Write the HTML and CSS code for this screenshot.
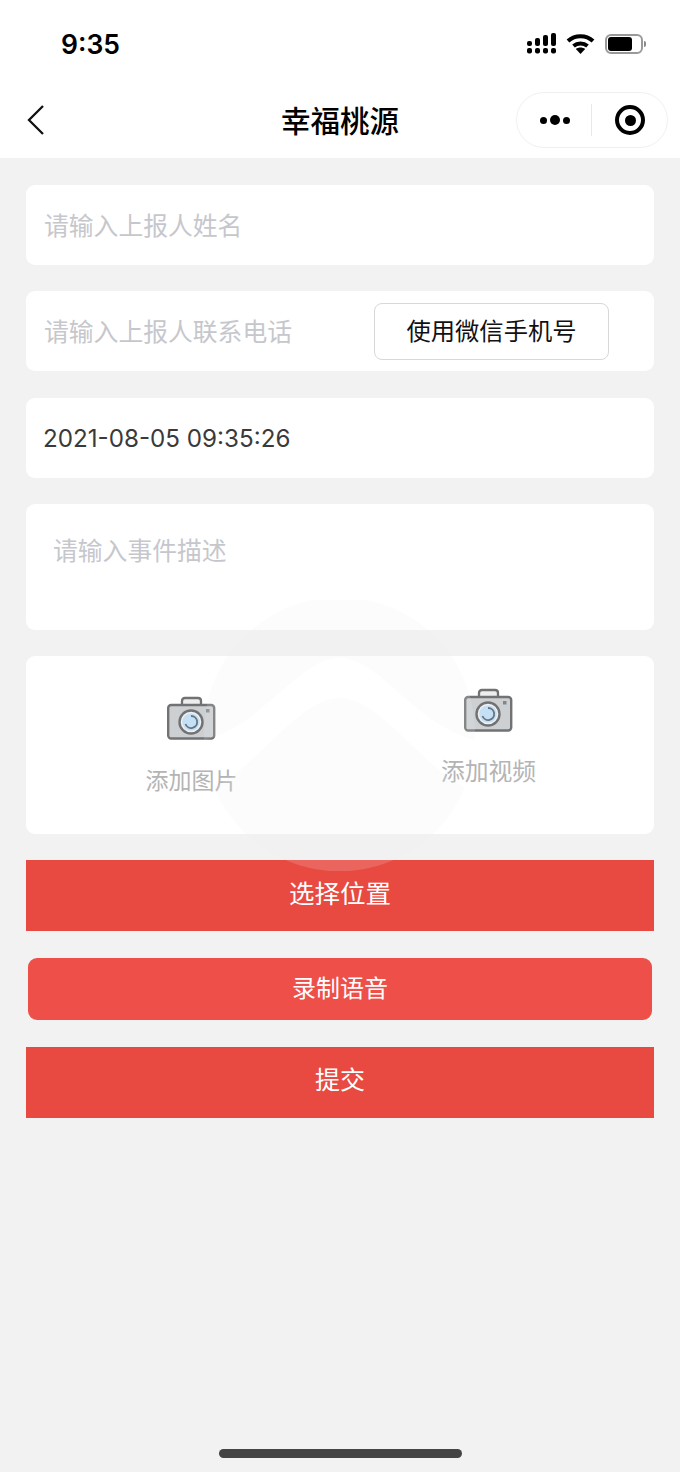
FILE: index.html
```html
<!DOCTYPE html>
<html lang="en">
<head>
  <meta charset="UTF-8" />
  <meta name="viewport" content="width=device-width, initial-scale=1.0"/>
  <title>幸福桃源</title>
  <link rel="stylesheet" href="styles.css">
</head>
<body>
  <div class="header">
    <div class="status-bar">
      <span class="time">9:35</span>
      <div class="status-icons">
        <svg width="30" height="21" viewBox="0 0 30 21" fill="#000">
          <rect x="0" y="8" width="5" height="5" rx="2"/>
          <rect x="8" y="5" width="5" height="8" rx="2"/>
          <rect x="16" y="2" width="5" height="11" rx="2"/>
          <rect x="24" y="0" width="5" height="13" rx="2"/>
          <rect x="0" y="15" width="5" height="5.500" rx="2"/>
          <rect x="8" y="15" width="5" height="5.500" rx="2"/>
          <rect x="16" y="15" width="5" height="5.500" rx="2"/>
          <rect x="24" y="15" width="5" height="5.500" rx="2"/>
        </svg>
        <svg class="wifi" width="29" height="21" viewBox="0 0 29 21" fill="none" stroke="#000" stroke-width="4">
          <path d="M2 8 C9 1.500 20 1.500 27 8"/>
          <path d="M7.500 13 C11.500 9.500 17.500 9.500 21.500 13"/>
          <path d="M14.500 21 L9.800 16 C12.500 14 16.500 14 19.200 16 Z" fill="#000" stroke="none"/>
        </svg>
        <div class="battery"><div class="battery-level"></div></div>
        <div class="battery-tip"></div>
      </div>
    </div>
    <div class="nav-bar">
      <svg class="back" width="20" height="32" viewBox="0 0 20 32" fill="none" stroke="#111" stroke-width="2.300">
        <path d="M17 2 L3 16 L17 30"/>
      </svg>
      <h1 class="title">幸福桃源</h1>
      <div class="capsule">
        <div class="dots"><i></i><b></b><i></i></div>
        <div class="divider"></div>
        <div class="target"><span></span></div>
      </div>
    </div>
  </div>

  <div class="form">
    <div class="field"><span class="placeholder">请输入上报人姓名</span></div>
    <div class="field">
      <span class="placeholder">请输入上报人联系电话</span>
      <button class="phone-btn">使用微信手机号</button>
    </div>
    <div class="field short"><span class="value">2021-08-05 09:35:26</span></div>
    <div class="field textarea"><span class="placeholder">请输入事件描述</span></div>

    <div class="media">
      <div class="media-item">
        <svg class="camera" width="50" height="44" viewBox="0 0 50 44">
          <path d="M15 10 V5 Q15 2 18 2 H31 Q34 2 34 5 V10" fill="#eceef0" stroke="#727272" stroke-width="2.300"/>
          <rect x="1.200" y="9" width="46" height="33.500" rx="3" fill="#cdd0d3" stroke="#727272" stroke-width="2.400"/>
          <rect x="39" y="13" width="3.500" height="3.500" fill="#858585"/>
          <circle cx="24" cy="26" r="11.500" fill="#eef2f6" stroke="#727272" stroke-width="2.400"/>
          <circle cx="24" cy="26" r="8.800" fill="#c5dff5"/>
          <path d="M24 20 A6 6 0 1 1 18.500 28" fill="none" stroke="#66747f" stroke-width="1.800"/>
        </svg>
        <span class="media-label">添加图片</span>
      </div>
      <div class="media-item second">
        <svg class="camera" width="50" height="44" viewBox="0 0 50 44">
          <path d="M15 10 V5 Q15 2 18 2 H31 Q34 2 34 5 V10" fill="#eceef0" stroke="#727272" stroke-width="2.300"/>
          <rect x="1.200" y="9" width="46" height="33.500" rx="3" fill="#cdd0d3" stroke="#727272" stroke-width="2.400"/>
          <rect x="39" y="13" width="3.500" height="3.500" fill="#858585"/>
          <circle cx="24" cy="26" r="11.500" fill="#eef2f6" stroke="#727272" stroke-width="2.400"/>
          <circle cx="24" cy="26" r="8.800" fill="#c5dff5"/>
          <path d="M24 20 A6 6 0 1 1 18.500 28" fill="none" stroke="#66747f" stroke-width="1.800"/>
        </svg>
        <span class="media-label">添加视频</span>
      </div>
    </div>

    <button class="btn-red btn-location">选择位置</button>
    <button class="btn-red btn-voice">录制语音</button>
    <button class="btn-red btn-submit">提交</button>
  </div>

  <svg class="watermark" width="271" height="271" viewBox="0 0 271 271" fill="#ededed" fill-opacity="0.17">
    <path d="M0.200 140 C60 125 95 58 135.500 58 C176 58 211 125 270.800 140 A135.500 135.500 0 1 0 0.200 140 Z"/>
    <path d="M10 187 C50 170 95 98 135.500 98 C176 98 221 170 261 187 A135.500 135.500 0 0 1 10 187 Z"/>
  </svg>

  <div class="home-indicator"></div>
</body>
</html>
```
FILE: styles.css
```css
* {
  box-sizing: border-box;
}

html,
body {
  margin: 0;
  padding: 0;
}

body {
  position: relative;
  height: 1472px;
  overflow: hidden;
  background-color: #f2f2f2;
  font-family: "Noto Sans CJK SC", "Liberation Sans", sans-serif;
}

.header {
  height: 158px;
  background-color: #fff;
}

.status-bar {
  display: flex;
  justify-content: space-between;
  align-items: center;
  height: 84px;
  padding: 0 34px 0 61px;
}

.time {
  margin-top: 3px;
  font-family: Inter, "Liberation Sans", sans-serif;
  font-size: 26.500px;
  font-weight: 600;
  color: #000;
}

.status-icons {
  display: flex;
  align-items: center;
  margin-top: 3px;
}

.wifi {
  margin-left: 9px;
}

.battery {
  width: 38px;
  height: 20px;
  margin-left: 10px;
  padding: 1px;
  border: 2px solid #999;
  border-radius: 6px;
}

.battery-level {
  width: 24px;
  height: 14px;
  background-color: #000;
  border-radius: 3px;
}

.battery-tip {
  width: 2px;
  height: 6px;
  margin-left: 1px;
  background-color: #8a8a8a;
  border-radius: 0 2px 2px 0;
}

.nav-bar {
  position: relative;
  display: flex;
  align-items: center;
  justify-content: center;
  height: 74px;
}

.back {
  position: absolute;
  left: 26px;
  top: 20px;
}

.title {
  margin: 0 0 5px;
  font-size: 29.500px;
  font-weight: 500;
  color: #000;
}

.capsule {
  position: absolute;
  left: 516px;
  top: 8px;
  display: flex;
  align-items: center;
  width: 152px;
  height: 56px;
  border: 1px solid #f0f0f0;
  border-radius: 28px;
  background-color: #fff;
}

.dots {
  display: flex;
  align-items: center;
  gap: 3px;
  margin-left: 23px;
}

.dots i {
  width: 7px;
  height: 7px;
  background-color: #000;
  border-radius: 50%;
}

.dots b {
  width: 10px;
  height: 10px;
  background-color: #000;
  border-radius: 50%;
}

.divider {
  width: 1px;
  height: 32px;
  margin-left: 21px;
  background-color: #e8e8e8;
}

.target {
  display: flex;
  align-items: center;
  justify-content: center;
  width: 30px;
  height: 30px;
  margin-left: 23px;
  border: 4px solid #000;
  border-radius: 50%;
}

.target span {
  width: 11px;
  height: 11px;
  background-color: #000;
  border-radius: 50%;
}

.form {
  padding: 27px 26px 0;
}

.field {
  display: flex;
  align-items: center;
  height: 80px;
  margin-bottom: 26px;
  padding: 0 45px 2px 18px;
  background-color: #fff;
  border-radius: 9px;
}

.field.short {
  margin-top: 27px;
  padding-bottom: 0;
}

.placeholder {
  font-size: 24.800px;
  color: #c6c7cc;
}

.value {
  margin-left: -1px;
  font-family: Inter, "Liberation Sans", sans-serif;
  font-size: 24.200px;
  color: #3a3a3a;
}

.phone-btn {
  width: 235px;
  height: 57px;
  margin-left: auto;
  margin-top: 2px;
  padding: 0 0 4px;
  background-color: #fff;
  border: 1px solid #d8d8d8;
  border-radius: 8px;
  font-family: inherit;
  font-size: 24.300px;
  color: #111;
}

.textarea {
  align-items: flex-start;
  height: 126px;
  margin-bottom: 26px;
  padding: 27px 0 0 27px;
}

.textarea .placeholder {
  line-height: 36px;
}

.media {
  display: grid;
  grid-template-columns: 297px 297px;
  height: 178px;
  margin-bottom: 26px;
  padding: 40px 0 0 17px;
  background-color: #fff;
  border-radius: 9px;
}

.media-item {
  display: flex;
  flex-direction: column;
  align-items: center;
}

.media-item.second {
  margin-top: -8px;
}

.media-label {
  margin-top: 22px;
  font-size: 23px;
  line-height: 34px;
  color: #b4b4b4;
}

.second .media-label {
  margin-top: 21px;
  font-size: 23.800px;
}

.btn-red {
  display: block;
  width: 100%;
  padding: 0;
  border: none;
  background-color: #e84a41;
  color: #fff;
  font-family: inherit;
}

.btn-location {
  height: 71px;
  padding-bottom: 8px;
  font-size: 25.500px;
}

.btn-voice {
  width: 624px;
  height: 62px;
  margin: 27px 2px;
  padding-bottom: 5px;
  background-color: #ee5049;
  border-radius: 9px;
  font-size: 24px;
}

.btn-submit {
  height: 71px;
  padding-bottom: 10px;
  font-size: 25px;
}

.watermark {
  position: absolute;
  left: 204px;
  top: 600px;
}

.home-indicator {
  position: absolute;
  left: 219px;
  top: 1449px;
  width: 243px;
  height: 9px;
  background-color: #444;
  border-radius: 5px;
}
```
